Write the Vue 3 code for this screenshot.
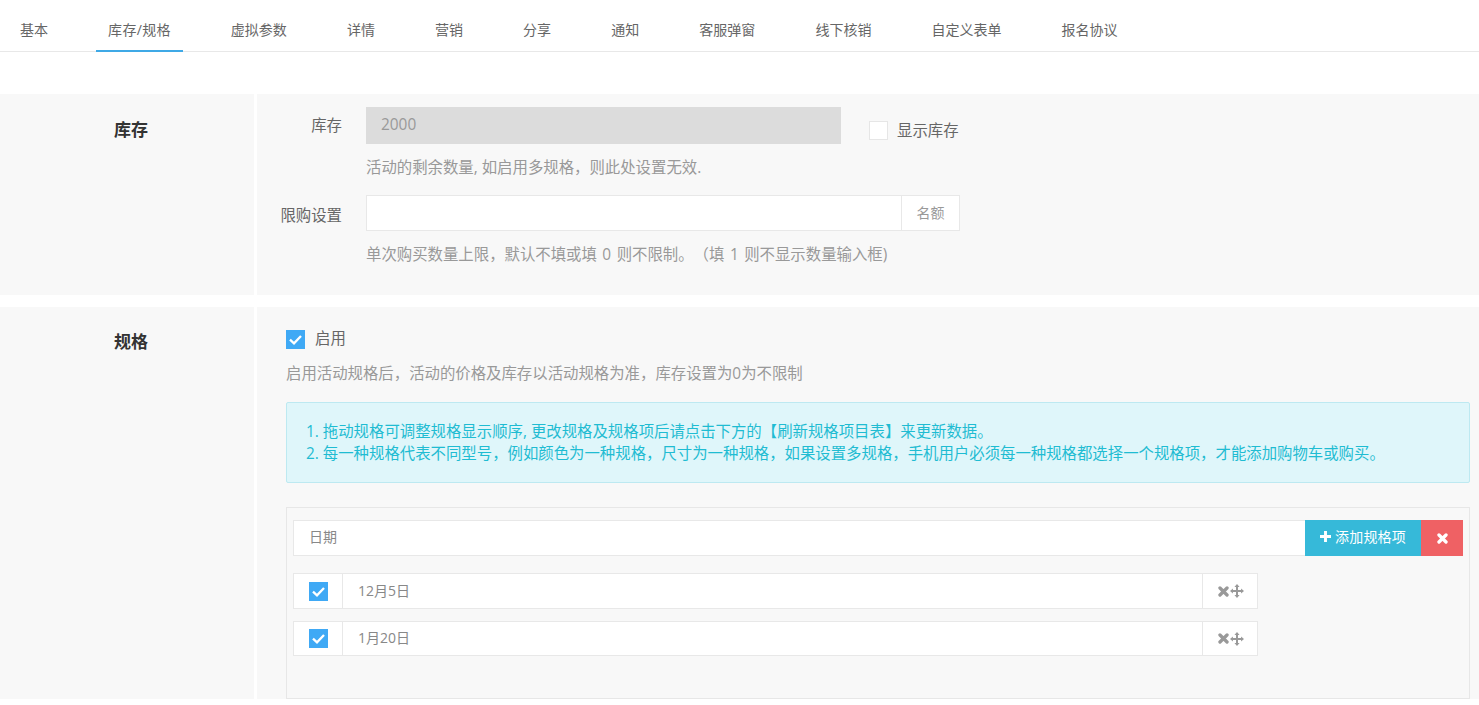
<script setup>
const tabs = ['基本', '库存/规格', '虚拟参数', '详情', '营销', '分享', '通知', '客服弹窗', '线下核销', '自定义表单', '报名协议']
const specItems = ['12月5日', '1月20日']
</script>

<template>
  <div class="page">
    <ul class="tabs">
      <li v-for="(tab, i) in tabs" :key="tab" class="tab" :class="{ active: i === 1 }">{{ tab }}</li>
    </ul>

    <section class="panel stock">
      <div class="panel-title">库存</div>
      <div class="panel-body">
        <div class="form-row">
          <label class="form-label">库存</label>
          <input class="field field-disabled" value="2000" disabled />
          <label class="show-stock">
            <span class="check"></span>
            显示库存
          </label>
        </div>
        <p class="help">活动的剩余数量, 如启用多规格，则此处设置无效.</p>
        <div class="form-row limit-row">
          <label class="form-label limit-label">限购设置</label>
          <div class="input-group">
            <input class="group-input" />
            <span class="group-addon">名额</span>
          </div>
        </div>
        <p class="help help-wide">单次购买数量上限，默认不填或填 0 则不限制。（填 1 则不显示数量输入框)</p>
      </div>
    </section>

    <section class="panel spec">
      <div class="panel-title spec-title">规格</div>
      <div class="panel-body spec-body">
        <label class="enable">
          <span class="check checked">
            <svg viewBox="0 0 19 19"><path d="M4 9.6 8 13.4 15 6" /></svg>
          </span>
          启用
        </label>
        <p class="spec-help">启用活动规格后，活动的价格及库存以活动规格为准，库存设置为0为不限制</p>

        <div class="notice">
          <div>1. 拖动规格可调整规格显示顺序, 更改规格及规格项后请点击下方的【刷新规格项目表】来更新数据。</div>
          <div>2. 每一种规格代表不同型号，例如颜色为一种规格，尺寸为一种规格，如果设置多规格，手机用户必须每一种规格都选择一个规格项，才能添加购物车或购买。</div>
        </div>

        <div class="spec-box">
          <div class="spec-head">
            <input class="spec-name" value="日期" />
            <a class="btn btn-add">
              <svg class="icon-plus" viewBox="0 0 12 12"><path d="M4.4 0h3.2v4.4H12v3.2H7.6V12H4.4V7.6H0V4.4h4.4z" /></svg>
              添加规格项
            </a>
            <a class="btn btn-del">
              <svg class="icon-times" viewBox="0 0 10 10"><path d="M1.8 1.8 8.2 8.2M8.2 1.8 1.8 8.2" /></svg>
            </a>
          </div>
          <div v-for="item in specItems" :key="item" class="spec-item">
            <div class="item-check">
              <span class="check checked">
                <svg viewBox="0 0 19 19"><path d="M4 9.6 8 13.4 15 6" /></svg>
              </span>
            </div>
            <input class="item-input" :value="item" />
            <div class="item-tools">
              <svg class="icon-times" viewBox="0 0 10 10"><path d="M1.8 1.8 8.2 8.2M8.2 1.8 1.8 8.2" /></svg>
              <svg class="icon-move" viewBox="0 0 24 24"><path d="M12 0 16.4 5H13.7V10.3H19V7.6L24 12 19 16.4V13.7H13.7V19H16.4L12 24 7.6 19H10.3V13.7H5V16.4L0 12 5 7.6V10.3H10.3V5H7.6Z" /></svg>
            </div>
          </div>
        </div>
      </div>
    </section>
  </div>
</template>

<style>
html,
body {
  overflow: hidden;
  background: #fff;
}
</style>

<style scoped>
.page {
  height: 705px;
  overflow: hidden;
  font-family: "Open Sans", "Noto Sans CJK SC", sans-serif;
  color: #666;
  text-spacing-trim: space-all;
}
.tabs {
  display: flex;
  height: 52px;
  margin: 0;
  padding: 0 0 0 8px;
  list-style: none;
  box-sizing: border-box;
  border-bottom: 1px solid #e8e8e8;
}
.tab {
  height: 52px;
  box-sizing: border-box;
  padding: 0 12px;
  margin-right: 36.1px;
  font-size: 14px;
  line-height: 59px;
  color: #666;
  white-space: nowrap;
}
.tab.active {
  letter-spacing: 0.3px;
  border-bottom: 2px solid #3fa9e6;
}
.panel {
  display: flex;
  gap: 3px;
}
.stock {
  height: 201px;
  margin-top: 42px;
  margin-bottom: 12px;
}
.panel-title {
  width: 254px;
  flex: none;
  box-sizing: border-box;
  padding: 24px 0 0 114px;
  background: #f8f8f8;
  font-size: 17px;
  line-height: 24px;
  font-weight: 700;
  color: #333;
}
.spec-title {
  padding-top: 23px;
}
.panel-body {
  flex: 1;
  min-width: 0;
  box-sizing: border-box;
  padding-top: 13px;
  padding-left: 109px;
  background: #f8f8f8;
}
.form-row {
  display: flex;
}
.form-label {
  width: 85px;
  margin-left: -109px;
  margin-right: 24px;
  padding-top: 8px;
  text-align: right;
  font-size: 15.4px;
  line-height: 21px;
  color: #666;
  flex: none;
}
.field {
  box-sizing: border-box;
  width: 475px;
  height: 37px;
  padding: 0 15px 2px;
  border: 0;
  outline: 0;
  font: inherit;
  font-size: 15.4px;
}
.field-disabled {
  background: #dcdcdc;
  color: #999;
  opacity: 1;
  -webkit-text-fill-color: #999;
}
.show-stock {
  display: flex;
  align-items: flex-start;
  gap: 9px;
  height: 19px;
  margin-top: 14px;
  margin-left: 28px;
  font-size: 15.4px;
  line-height: 19px;
  color: #666;
}
.check {
  display: block;
  width: 19px;
  height: 19px;
  box-sizing: border-box;
  flex: none;
  background: #fff;
  border: 1px solid #e6e6e6;
}
.check.checked {
  background: #3fa9f5;
  border: 0;
}
.check svg {
  display: block;
  width: 19px;
  height: 19px;
  fill: none;
  stroke: #fff;
  stroke-width: 2.3;
}
.help {
  margin: 14px 0 17px;
  font-size: 15.4px;
  line-height: 20px;
  color: #999;
}
.help-wide {
  word-spacing: 1.5px;
}
.limit-row {
  height: 36px;
}
.limit-label {
  padding-top: 10px;
}
.input-group {
  display: flex;
  width: 594px;
  height: 36px;
  box-sizing: border-box;
  background: #fff;
  border: 1px solid #e8e8e8;
}
.group-input {
  flex: 1;
  min-width: 0;
  border: 0;
  outline: 0;
  background: transparent;
}
.group-addon {
  width: 58px;
  box-sizing: border-box;
  border-left: 1px solid #e8e8e8;
  text-align: center;
  font-size: 14px;
  line-height: 34px;
  color: #999;
}
.spec-body {
  padding: 23px 9px 0 29px;
}
.enable {
  display: flex;
  align-items: flex-start;
  gap: 10px;
  height: 19px;
  font-size: 15.4px;
  line-height: 17px;
  color: #666;
}
.spec-help {
  margin: 15px 0 18px;
  font-size: 15.4px;
  line-height: 20px;
  color: #999;
}
.notice {
  height: 81px;
  box-sizing: border-box;
  padding: 18px 19px 0;
  background: #dff6fa;
  border: 1px solid #bde9f1;
  border-radius: 2px;
  font-size: 15.4px;
  line-height: 22px;
  color: #1fbcd2;
}
.spec-box {
  margin-top: 24px;
  padding: 12px 6px 42px;
  border: 1px solid #e7e7e7;
}
.spec-head {
  display: flex;
  height: 36px;
  margin-bottom: 17px;
}
.spec-name {
  flex: 1;
  min-width: 0;
  box-sizing: border-box;
  padding: 0 15px 5px;
  background: #fff;
  border: 1px solid #e8e8e8;
  border-right: 0;
  outline: 0;
  font: inherit;
  font-size: 14px;
  color: #888;
}
.btn {
  display: flex;
  align-items: center;
  justify-content: center;
  flex: none;
  box-sizing: border-box;
  color: #fff;
  font-size: 14px;
}
.btn-add {
  width: 116px;
  gap: 4px;
  padding-bottom: 4px;
  letter-spacing: 0.2px;
  background: #36b9d9;
}
.btn-del {
  width: 42px;
  background: #ef6164;
}
.icon-plus {
  width: 11px;
  height: 11px;
  fill: #fff;
}
.icon-times {
  width: 11px;
  height: 11px;
  fill: none;
  stroke: #fff;
  stroke-width: 3;
  stroke-linecap: round;
}
.spec-item {
  display: flex;
  width: 965px;
  height: 35px;
  box-sizing: border-box;
  background: #fff;
  border: 1px solid #e8e8e8;
}
.spec-item:nth-child(2) {
  height: 36px;
  margin-bottom: 12px;
}
.item-check {
  display: flex;
  align-items: center;
  justify-content: center;
  width: 49px;
  box-sizing: border-box;
  border-right: 1px solid #e8e8e8;
  flex: none;
}
.item-input {
  flex: 1;
  min-width: 0;
  box-sizing: border-box;
  padding: 0 15px 3px;
  border: 0;
  outline: 0;
  background: transparent;
  font: inherit;
  font-size: 14px;
  color: #888;
}
.item-tools {
  display: flex;
  align-items: center;
  gap: 1px;
  width: 55px;
  box-sizing: border-box;
  padding-left: 15px;
  border-left: 1px solid #e8e8e8;
  flex: none;
}
.item-tools .icon-times {
  stroke: #999;
}
.icon-move {
  width: 14px;
  height: 14px;
  fill: #999;
}
</style>
